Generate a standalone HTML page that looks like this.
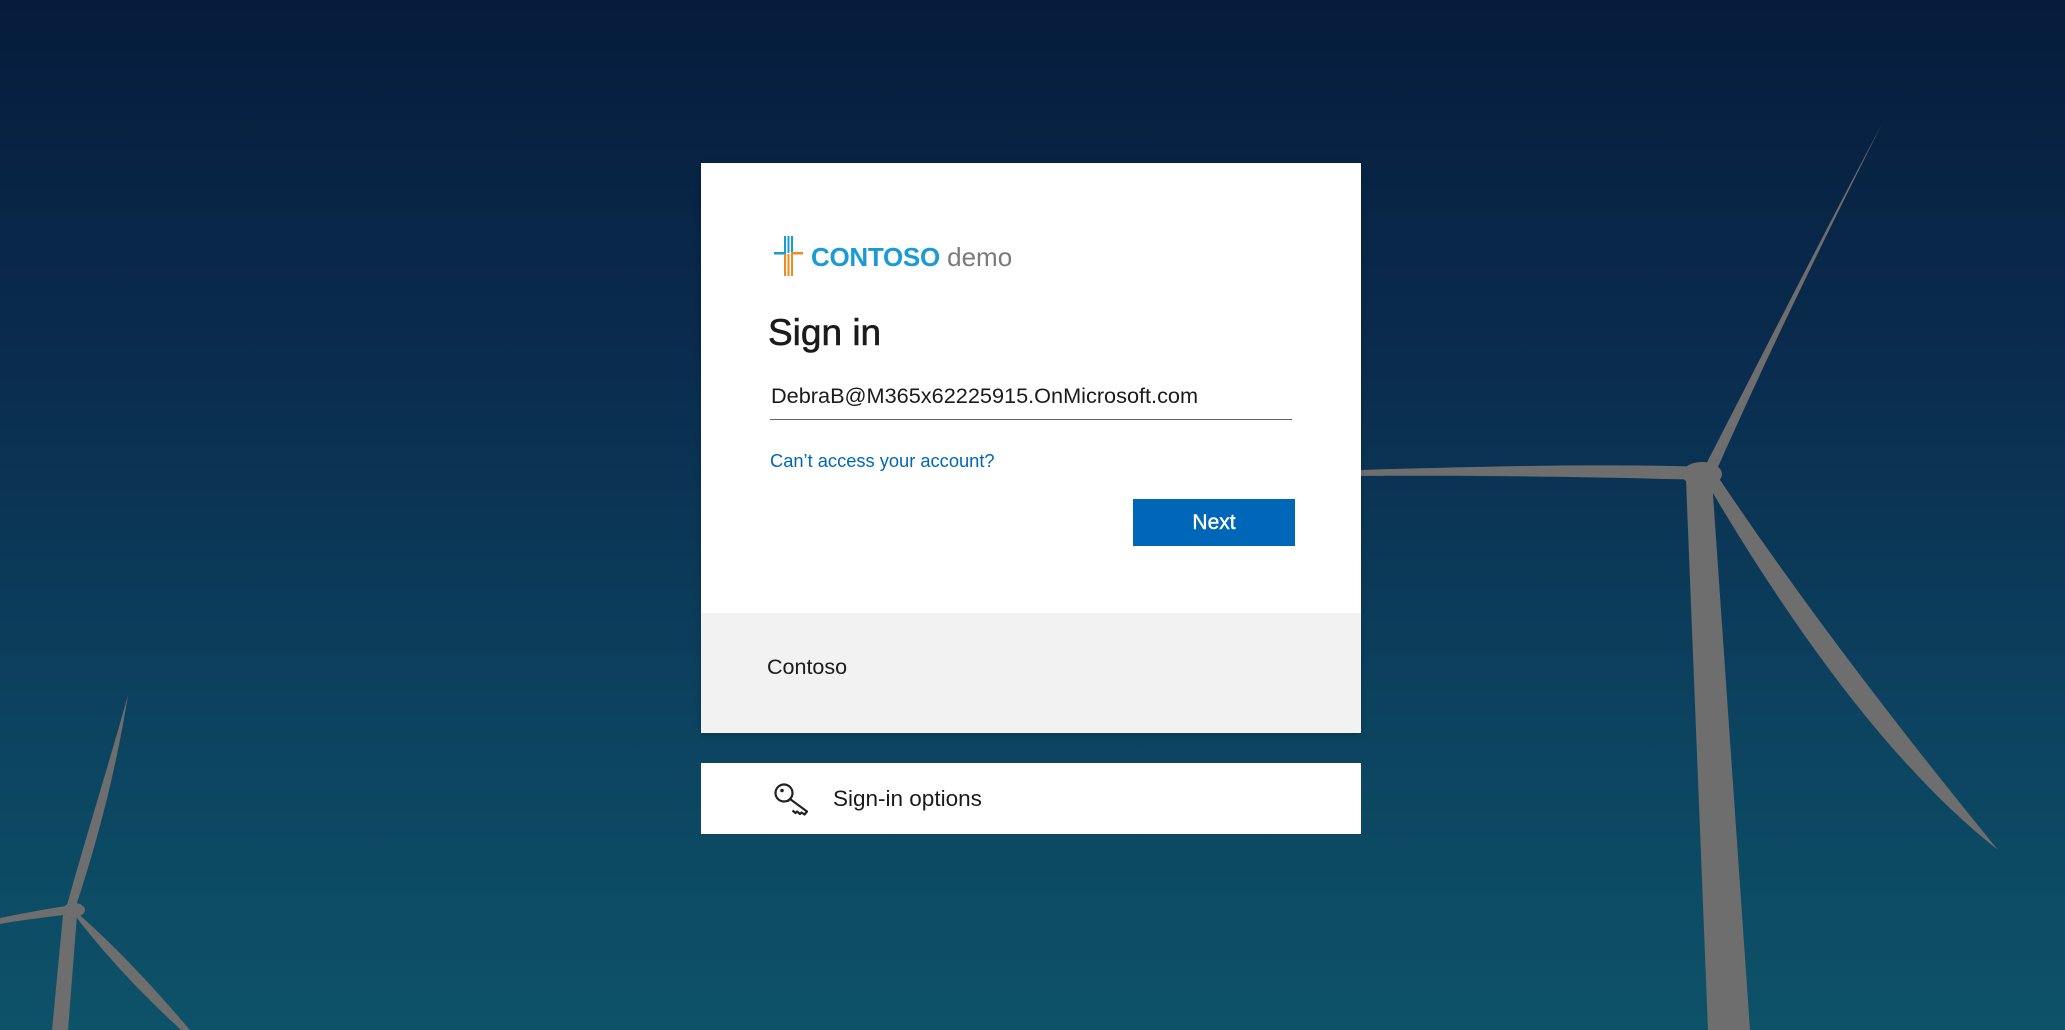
<!DOCTYPE html>
<html><head><meta charset="utf-8"><style>
html,body{margin:0;padding:0;width:2065px;height:1030px;overflow:hidden;font-family:"Segoe UI","Liberation Sans","DejaVu Sans",sans-serif;}
body{background:linear-gradient(180deg,#061c3c 0%,#0a2c4e 35%,#0c4360 70%,#0d5268 100%);position:relative;}
svg.bg{position:absolute;left:0;top:0}
.card{position:absolute;left:701px;top:163px;width:660px;height:570px;background:#fff;box-shadow:0 2px 6px rgba(0,0,0,.2)}
.foot{position:absolute;left:0;top:450px;width:660px;height:120px;background:#f2f2f2}
.opt{position:absolute;left:701px;top:763px;width:660px;height:71px;background:#fff}
.abs{position:absolute;white-space:nowrap}
</style></head><body>
<svg class="bg" width="2065" height="1030" viewBox="0 0 2065 1030">
 <g fill="#6e6e6e">
  <polygon points="1686,480 1712,480 1750,1030 1708,1030"/>
  <path d="M1703,470 C1760,360 1820,240 1882,124 C1826,235 1765,360 1714,476 Z"/>
  <path d="M1704,478 L1712,468 C1800,600 1900,730 1998,850 C1890,765 1790,625 1704,478 Z"/>
  <path d="M1705,467 C1600,463 1460,467 1361,470 L1361,476 C1460,475 1600,477 1705,480 Z"/>
  <ellipse cx="1702" cy="474" rx="20" ry="12"/>
  <polygon points="63,915 77,915 68,1030 52,1030"/>
  <path d="M67,905 C88,830 110,760 128,695 C116,770 98,840 74,912 Z"/>
  <path d="M66,906 L72,914 C30,919 10,922 0,924 L0,918 C20,914 40,910 66,906 Z"/>
  <path d="M68,906 L75,911 C120,950 160,995 190,1030 L181,1030 C140,992 100,950 68,906 Z"/>
  <ellipse cx="74" cy="910" rx="11" ry="7"/>
 </g>
</svg>
<div class="card">
 <svg class="abs" style="left:73px;top:73px" width="30" height="40" viewBox="0 0 30 40">
  <rect x="10" y="0" width="2" height="17" fill="#1a9ad6"/><rect x="13.5" y="0" width="2" height="17" fill="#1a9ad6"/><rect x="17" y="0" width="2" height="17" fill="#1a9ad6"/>
  <rect x="0" y="16" width="12" height="2.5" fill="#1a9ad6"/>
  <rect x="17" y="16" width="12" height="2.5" fill="#f08a24"/>
  <rect x="10" y="18" width="2" height="22" fill="#f08a24"/><rect x="13.5" y="18" width="2" height="22" fill="#f08a24"/><rect x="17" y="18" width="2" height="22" fill="#f08a24"/>
 </svg>
 <div class="abs" style="left:110px;top:77px;font-size:26px;line-height:34px"><b style="color:#1a9ad6;letter-spacing:-0.3px">CONTOSO</b> <span style="color:#7a7a7a">demo</span></div>
 <div class="abs" style="left:67px;top:147px;font-size:37px;font-weight:normal;color:#1b1b1b;line-height:46px;-webkit-text-stroke:0.6px #1b1b1b">Sign in</div>
 <div class="abs" style="left:70px;top:218px;font-size:21.7px;color:#1b1b1b;line-height:30px">DebraB@M365x62225915.OnMicrosoft.com</div>
 <div class="abs" style="left:69px;top:256px;width:522px;height:1px;background:#666"></div>
 <div class="abs" style="left:69px;top:285px;font-size:18.3px;color:#0067b8;line-height:26px">Can’t access your account?</div>
 <div class="abs" style="left:432px;top:336px;width:162px;height:47px;background:#0067b8;color:#fff;font-size:21px;text-align:center;line-height:47px;-webkit-text-stroke:0.4px #fff">Next</div>
 <div class="foot"><div class="abs" style="left:66px;top:39px;font-size:21.5px;color:#1b1b1b;line-height:30px">Contoso</div></div>
</div>
<div class="opt">
 <svg class="abs" style="left:73px;top:19px" width="36" height="34" viewBox="0 0 36 34">
  <g fill="none" stroke="#222" stroke-width="2.2" stroke-linejoin="round">
   <circle cx="10" cy="11" r="8.5"/>
   <path d="M16,17 L33,29.5 L30.5,32.5 L27.5,30.5 L26,32 L23,29.5 L21.5,31 L18.5,28.5 M16,17 L13.5,19.5"/>
  </g>
  <circle cx="8" cy="8.5" r="1.8" fill="#222"/>
 </svg>
 <div class="abs" style="left:132px;top:21px;font-size:22.5px;color:#1b1b1b;line-height:30px">Sign-in options</div>
</div>
</body></html>
